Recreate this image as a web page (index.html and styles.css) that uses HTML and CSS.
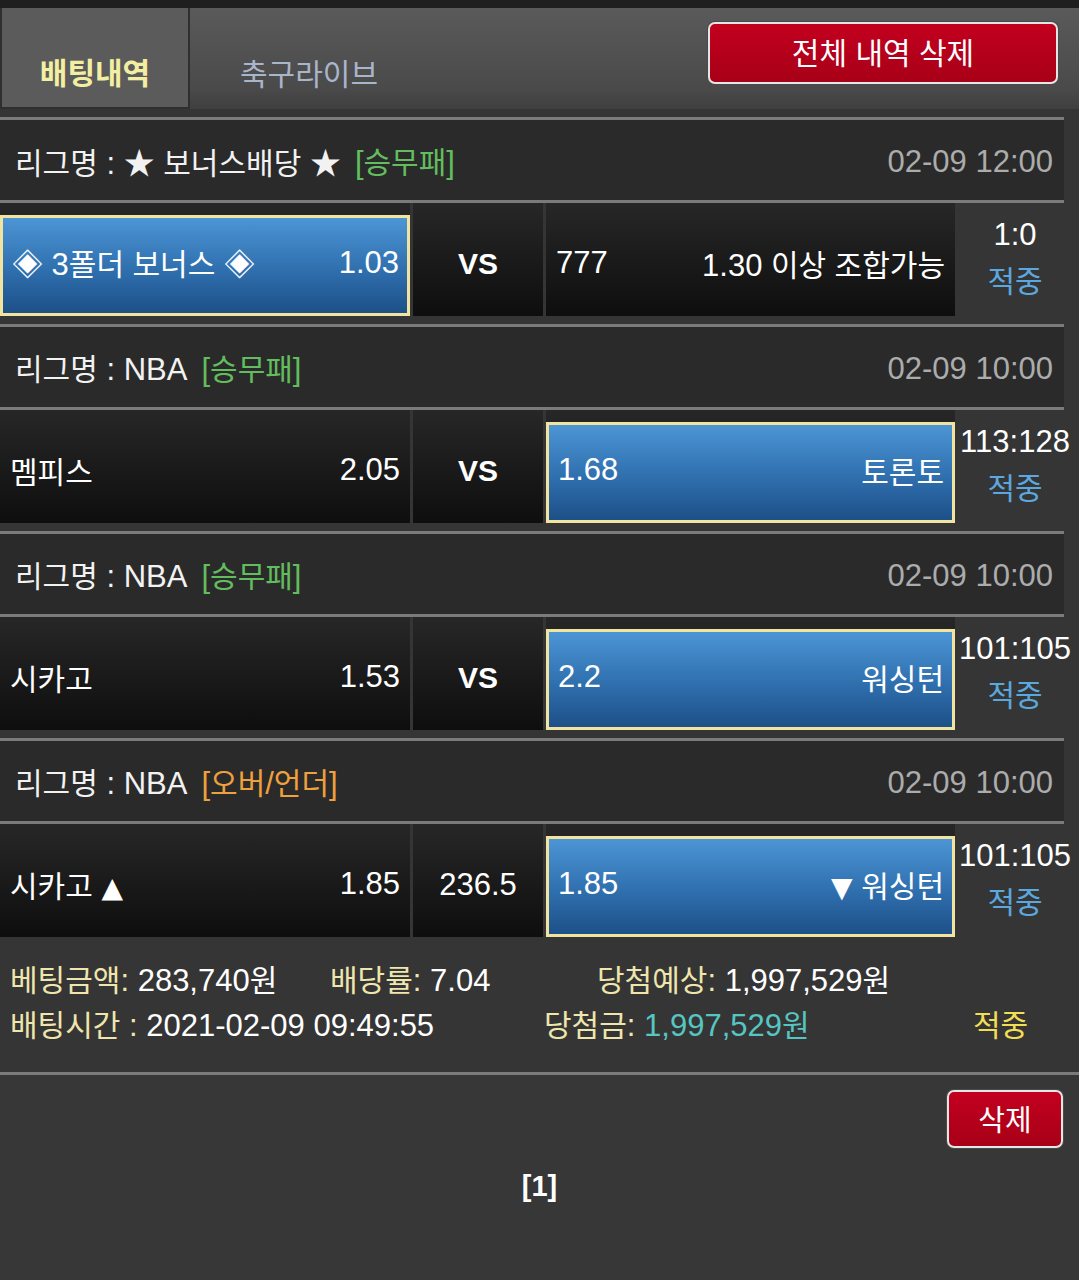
FILE: index.html
```html
<!DOCTYPE html>
<html lang="ko">
<head>
<meta charset="utf-8">
<title>배팅내역</title>
<link rel="stylesheet" href="styles.css">
</head>
<body>
<div class="topbar">
  <div class="tab tab-active">배팅내역</div>
  <div class="tab tab-plain">축구라이브</div>
  <button class="btn-red btn-all">전체 내역 삭제</button>
</div>

<div class="group">
  <div class="league"><span><span class="ko">리그명</span> : ★ <span class="ko">보너스배당</span> ★</span><span class="type green">[<span class="ko">승무패</span>]</span><span class="date">02-09 12:00</span></div>
  <div class="match">
    <div class="cell home sel"><div class="in"><span>◈ 3<span class="ko">폴더 보너스</span> ◈</span><span>1.03</span></div></div>
    <div class="cell mid"><div class="in"><b class="vs">VS</b></div></div>
    <div class="cell away"><div class="in"><span>777</span><span>1.30 <span class="ko">이상 조합가능</span></span></div></div>
    <div class="score"><div>1:0</div><div class="hit">적중</div></div>
  </div>
</div>

<div class="group">
  <div class="league"><span><span class="ko">리그명</span> : NBA</span><span class="type green">[<span class="ko">승무패</span>]</span><span class="date">02-09 10:00</span></div>
  <div class="match">
    <div class="cell home"><div class="in"><span class="ko">멤피스</span><span>2.05</span></div></div>
    <div class="cell mid"><div class="in"><b class="vs">VS</b></div></div>
    <div class="cell away sel"><div class="in"><span>1.68</span><span class="ko">토론토</span></div></div>
    <div class="score"><div>113:128</div><div class="hit">적중</div></div>
  </div>
</div>

<div class="group">
  <div class="league"><span><span class="ko">리그명</span> : NBA</span><span class="type green">[<span class="ko">승무패</span>]</span><span class="date">02-09 10:00</span></div>
  <div class="match">
    <div class="cell home"><div class="in"><span class="ko">시카고</span><span>1.53</span></div></div>
    <div class="cell mid"><div class="in"><b class="vs">VS</b></div></div>
    <div class="cell away sel"><div class="in"><span>2.2</span><span class="ko">워싱턴</span></div></div>
    <div class="score"><div>101:105</div><div class="hit">적중</div></div>
  </div>
</div>

<div class="group">
  <div class="league"><span><span class="ko">리그명</span> : NBA</span><span class="type orange">[<span class="ko">오버</span>/<span class="ko">언더</span>]</span><span class="date">02-09 10:00</span></div>
  <div class="match">
    <div class="cell home"><div class="in"><span><span class="ko">시카고</span> <span class="tri">▲</span></span><span>1.85</span></div></div>
    <div class="cell mid"><div class="in"><span>236.5</span></div></div>
    <div class="cell away sel"><div class="in"><span>1.85</span><span><span class="tri">▼</span> <span class="ko">워싱턴</span></span></div></div>
    <div class="score"><div>101:105</div><div class="hit">적중</div></div>
  </div>
</div>

<div class="summary">
  <div class="srow">
    <span class="s1a"><span class="lbl"><span class="ko">베팅금액</span>:</span> 283,740<span class="ko">원</span></span>
    <span class="s1b"><span class="lbl"><span class="ko">배당률</span>:</span> 7.04</span>
    <span><span class="lbl"><span class="ko">당첨예상</span>:</span> 1,997,529<span class="ko">원</span></span>
  </div>
  <div class="srow">
    <span class="s2a"><span class="lbl"><span class="ko">배팅시간</span> :</span> 2021-02-09 09:49:55</span>
    <span class="s2b"><span class="lbl"><span class="ko">당첨금</span>:</span> <span class="won">1,997,529<span class="ko">원</span></span></span>
    <span class="yes">적중</span>
  </div>
</div>

<div class="bottom">
  <div class="actions"><button class="btn-red btn-del">삭제</button></div>
  <div class="pager">[1]</div>
</div>
</body>
</html>
```

FILE: styles.css
```css
* { box-sizing: border-box; }

body {
  margin: 0;
  width: 1079px;
  min-height: 1280px;
  background: #353535;
  color: #fff;
  font-family: "Liberation Sans", Arial, "Noto Sans CJK KR", sans-serif;
  font-size: 31px;
  overflow: hidden;
}

.ko { font-family: "Noto Sans CJK KR", sans-serif; font-size: 30px; }

.topbar {
  border-top: 8px solid #1f1f1f;
  height: 109px;
  display: flex;
  align-items: stretch;
  background: linear-gradient(#5a5a5a, #4a4a4a 80%, #3f3f3f);
}

.tab {
  display: flex;
  align-items: center;
  justify-content: center;
  padding-top: 26px;
  font-family: "Noto Sans CJK KR", sans-serif;
  font-size: 30px;
}

.tab-active {
  width: 190px;
  background: #5b5b5b;
  border: 2px solid #2f2f2f;
  border-top: 0;
  color: #f3efa2;
  font-weight: bold;
}

.tab-plain {
  margin-left: 50px;
  color: #a9b5c9;
}

.btn-red {
  font-family: "Noto Sans CJK KR", sans-serif;
  color: #fff;
  background: linear-gradient(#c2001e, #a80018);
  border: 2px solid #e6e6e6;
  border-radius: 7px;
  box-shadow: 0 0 0 1px #4a4a4a;
  padding: 0;
}

.btn-all {
  margin: 14px 21px 0 auto;
  width: 350px;
  height: 62px;
  padding-bottom: 4px;
  font-size: 30px;
}

.group { margin-top: 8px; }

.league {
  width: 1064px;
  height: 86px;
  background: #2a2a2a;
  border-top: 3px solid #7b7b7b;
  border-bottom: 3px solid #7b7b7b;
  display: flex;
  align-items: center;
  padding: 0 11px 0 15px;
  color: #f2f2f2;
  white-space: nowrap;
}

.type { margin-left: 14px; }
.green { color: #62bd5e; }
.orange { color: #eea13c; }

.date {
  margin-left: auto;
  padding-top: 4px;
  color: #acacac;
}

.match {
  display: flex;
  height: 113px;
}

.cell {
  display: flex;
  background: linear-gradient(#272727, #0e0e0e);
}

.home { width: 410px; }
.mid { width: 130px; margin-left: 3px; }
.away { width: 409px; margin-left: 3px; }

.in {
  flex: 1;
  display: flex;
  align-items: center;
  justify-content: space-between;
  margin-top: 12px;
  padding: 0 10px 6px;
  white-space: nowrap;
}

.mid .in { justify-content: center; padding: 0 0 4px; }

.sel .in {
  background: linear-gradient(#4c95d5, #2f6fae 55%, #1d5088);
  border: 3px solid #f1e3a0;
  padding: 0 8px 6px 9px;
}

.vs {
  font-weight: bold;
  font-size: 30px;
}

.tri { font-size: 28px; font-family: "DejaVu Sans", sans-serif; }

.score {
  width: 120px;
  text-align: center;
  padding-top: 10px;
  line-height: 44px;
  white-space: nowrap;
}

.hit {
  color: #5ba7df;
  font-family: "Noto Sans CJK KR", sans-serif;
  font-size: 30px;
}

.summary {
  height: 135px;
  padding: 20px 0 0 10px;
  line-height: 43px;
}

.srow { display: flex; white-space: nowrap; }
.s1a { width: 320px; }
.s1b { width: 267px; }
.s2a { width: 534px; }
.s2b { width: 429px; }

.lbl { color: #efe6ad; }
.won { color: #55c6c2; }
.yes { color: #f1de55; font-family: "Noto Sans CJK KR", sans-serif; font-size: 30px; }

.bottom {
  border-top: 3px solid #7b7b7b;
  background: #373737;
  height: 210px;
}

.actions {
  display: flex;
  justify-content: flex-end;
  padding: 15px 16px 0 0;
}

.btn-del {
  width: 116px;
  height: 58px;
  padding-bottom: 3px;
  font-size: 29px;
}

.pager {
  margin-top: 21px;
  text-align: center;
  line-height: 34px;
  font-weight: bold;
  font-size: 29px;
}
```
